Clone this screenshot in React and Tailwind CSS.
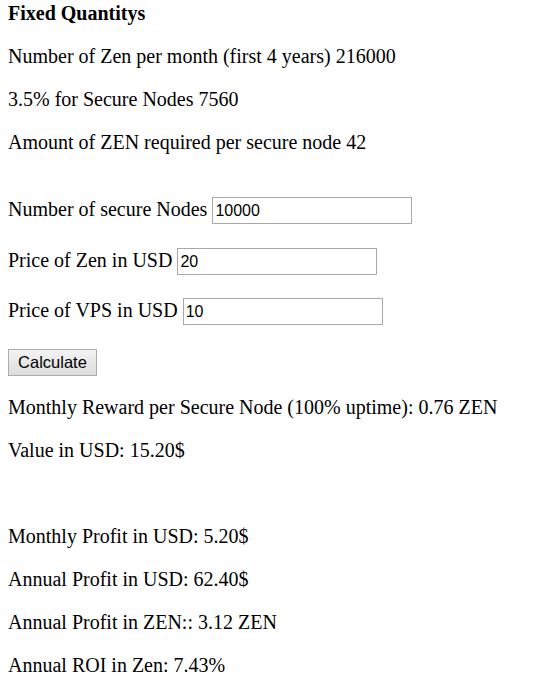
import React, { useState } from 'react';

const serif = { fontFamily: '"Liberation Serif", "Times New Roman", serif' };
const sans = { fontFamily: '"Liberation Sans", Arial, sans-serif' };

const Line = ({ children, className = '' }) => (
  <p className={`leading-[23px] ${className}`}>{children}</p>
);

const Field = ({ label, value, onChange, className = '' }) => (
  <div className={`flex items-start h-[27px] ${className}`}>
    <span className="leading-[23px] pt-[0.5px]">{label}</span>
    <input
      type="text"
      value={value}
      onChange={(e) => onChange(e.target.value)}
      className="ml-[5px] w-[200px] h-[27px] border border-[#a9a9a9] bg-white px-[2px] text-[16px] text-black outline-none"
      style={sans}
    />
  </div>
);

export default function App() {
  const [nodes, setNodes] = useState('10000');
  const [zenPrice, setZenPrice] = useState('20');
  const [vpsPrice, setVpsPrice] = useState('10');

  return (
    <div className="bg-white text-black text-[20px] px-[8px] pt-[2px] pb-[10px] min-h-[689px]" style={serif}>
      <Line className="font-bold">Fixed Quantitys</Line>
      <Line className="mt-[20px]">Number of Zen per month (first 4 years) 216000</Line>
      <Line className="mt-[20px]">3.5% for Secure Nodes 7560</Line>
      <Line className="mt-[20px]">Amount of ZEN required per secure node 42</Line>

      <Field label="Number of secure Nodes" value={nodes} onChange={setNodes} className="mt-[43px]" />
      <Field label="Price of Zen in USD" value={zenPrice} onChange={setZenPrice} className="mt-[24px]" />
      <Field label="Price of VPS in USD" value={vpsPrice} onChange={setVpsPrice} className="mt-[23px]" />

      <div className="flex mt-[24px]">
        <button
          className="w-[89px] h-[27px] border border-[#adadad] bg-gradient-to-b from-[#f3f3f3] to-[#dddddd] text-[16.5px] leading-none text-black"
          style={sans}
        >
          Calculate
        </button>
      </div>

      <Line className="mt-[20px]">Monthly Reward per Secure Node (100% uptime): 0.76 ZEN</Line>
      <Line className="mt-[20px]">Value in USD: 15.20$</Line>
      <Line className="mt-[63px]">Monthly Profit in USD: 5.20$</Line>
      <Line className="mt-[20px]">Annual Profit in USD: 62.40$</Line>
      <Line className="mt-[20px]">Annual Profit in ZEN:: 3.12 ZEN</Line>
      <Line className="mt-[20px]">Annual ROI in Zen: 7.43%</Line>
    </div>
  );
}
